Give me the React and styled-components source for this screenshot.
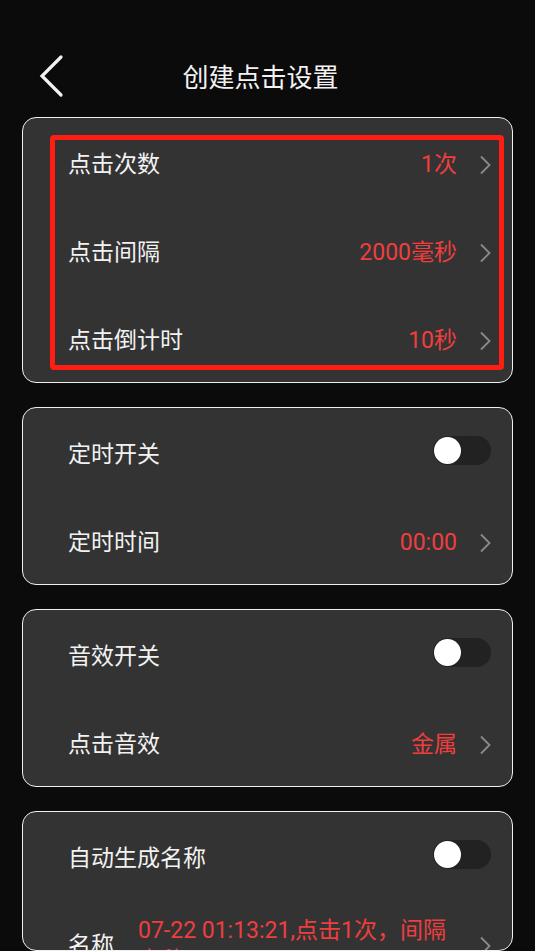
import styled, { createGlobalStyle } from "styled-components";

const GlobalStyle = createGlobalStyle`
  body {
    margin: 0;
    background: #0b0b0b;
    font-family: Roboto, "Noto Sans CJK SC", sans-serif;
    line-height: 1.3;
  }
`;

const Page = styled.div`
  display: flex;
  flex-direction: column;
  gap: 24px;
  padding: 52px 22px 0;
  height: 951px;
  box-sizing: border-box;
  overflow: hidden;
`;

const Header = styled.div`
  display: grid;
  grid-template-columns: 1fr auto 1fr;
  align-items: center;
  height: 50px;
  margin-bottom: -7px;
`;

const Back = styled.div`
  display: flex;
  align-items: center;
  padding-left: 16px;
`;

const Title = styled.div`
  color: #f2f2f2;
  font-size: 26px;
  font-family: "Noto Sans CJK SC", sans-serif;
  margin-right: 14px;
`;

const Card = styled.div`
  position: relative;
  background: #333333;
  border: 1.5px solid #f0f0f0;
  border-radius: 14px;
  overflow: hidden;
  height: ${(p) => (p.height ? p.height + "px" : "auto")};
  box-sizing: border-box;
  flex-shrink: 0;
`;

// red tutorial frame drawn over the first card's rows
const Highlight = styled.div`
  position: absolute;
  top: 17px;
  left: 27px;
  right: 8px;
  bottom: 12px;
  border: 5.5px solid #ff1d14;
  border-radius: 4px;
  pointer-events: none;
`;

const Row = styled.div`
  display: flex;
  align-items: center;
  min-height: 88px;
  padding: ${(p) => (p.tall ? "16px" : "6px")} 21px
    ${(p) => (p.tall ? "16px" : "0")} 45px;
  box-sizing: border-box;
`;

const Label = styled.div`
  color: #f2f2f2;
  font-size: 23px;
  flex-shrink: 0;
`;

const Value = styled.div`
  margin-left: auto;
  color: #f03e3e;
  font-size: 23px;
`;

const LongValue = styled.div`
  flex: 1;
  margin-left: 24px;
  color: #f03e3e;
  font-size: 23px;
  text-align: left;
`;

const Toggle = styled.div`
  margin-left: auto;
  margin-top: -10px;
  width: 58px;
  height: 29px;
  border-radius: 15px;
  background: #222222;
  display: flex;
  align-items: center;
  padding-left: 1px;
  box-sizing: border-box;
  &::before {
    content: "";
    width: 27px;
    height: 27px;
    border-radius: 50%;
    background: #ffffff;
  }
`;

const Arrow = () => (
  <svg width="12" height="20" viewBox="0 0 12 20" style={{ marginLeft: 22, flexShrink: 0 }}>
    <path d="M2 1.5 L10.5 10 L2 18.5" fill="none" stroke="#8a8a8a" strokeWidth="1.8" />
  </svg>
);

const BackIcon = () => (
  <svg width="26" height="44" viewBox="0 0 26 44">
    <path d="M23 3 L4 22 L23 41" fill="none" stroke="#f2f2f2" strokeWidth="3.2" strokeLinecap="round" />
  </svg>
);

const App = () => {
  return (
    <>
      <GlobalStyle />
      <Page>
        <Header>
          <Back>
            <BackIcon />
          </Back>
          <Title>创建点击设置</Title>
          <div />
        </Header>

        <Card>
          <Row>
            <Label>点击次数</Label>
            <Value>1次</Value>
            <Arrow />
          </Row>
          <Row>
            <Label>点击间隔</Label>
            <Value>2000毫秒</Value>
            <Arrow />
          </Row>
          <Row>
            <Label>点击倒计时</Label>
            <Value>10秒</Value>
            <Arrow />
          </Row>
          <Highlight />
        </Card>

        <Card>
          <Row>
            <Label>定时开关</Label>
            <Toggle />
          </Row>
          <Row>
            <Label>定时时间</Label>
            <Value>00:00</Value>
            <Arrow />
          </Row>
        </Card>

        <Card>
          <Row>
            <Label>音效开关</Label>
            <Toggle />
          </Row>
          <Row>
            <Label>点击音效</Label>
            <Value>金属</Value>
            <Arrow />
          </Row>
        </Card>

        <Card height={140}>
          <Row>
            <Label>自动生成名称</Label>
            <Toggle />
          </Row>
          <Row tall>
            <Label>名称</Label>
            <LongValue>07-22 01:13:21,点击1次，间隔毫秒</LongValue>
            <Arrow />
          </Row>
        </Card>
      </Page>
    </>
  );
};

export default App;
